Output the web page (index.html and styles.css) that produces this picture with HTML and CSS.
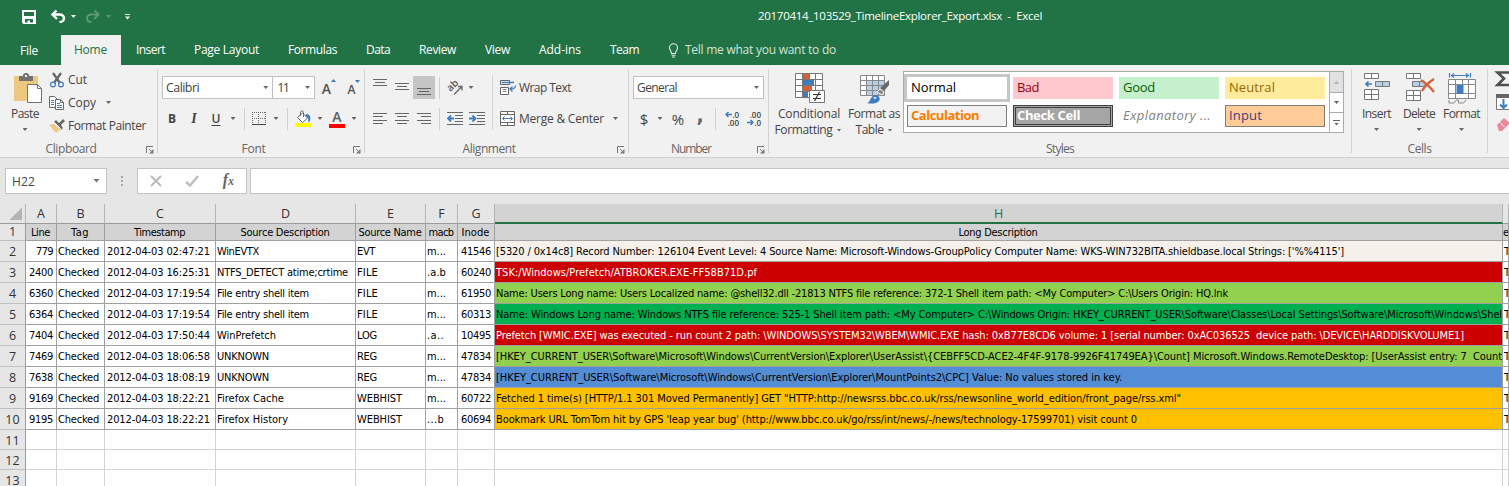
FILE: index.html
```html
<!DOCTYPE html>
<html lang="en">
<head>
<meta charset="utf-8">
<title>20170414_103529_TimelineExplorer_Export.xlsx - Excel</title>
<link rel="stylesheet" href="styles.css">
</head>
<body>
<header class="top">
  <div class="titlebar">
    <svg class="quick" width="140" height="32" viewBox="0 0 140 32" fill="none">
      <path d="M22 10h14v14H23.500L22 22.500zM24 12v4h10v-4zM25 19v3.500h2.500V20.500H30V22.500h3V19z" fill="#fff" fill-rule="evenodd"/>
      <path d="M56.500 10.500L52.500 14.500l4.500 4.500M53 14.500h6.500c6 0 6 7.500 0 7.500" stroke="#fff" stroke-width="2.400"/>
      <path d="M71 15h5l-2.500 3z" fill="#fff"/>
      <path d="M94.500 10.500L98.500 14.500l-4.500 4.500M98 14.500h-6.500c-6 0-6 7.500 0 7.500" stroke="#5c9876" stroke-width="2"/>
      <path d="M106 15h5l-2.500 3z" fill="#5c9876"/>
      <path d="M125 14.500h5" stroke="#fff"/><path d="M125 16.500h5l-2.500 3z" fill="#fff"/>
    </svg>
    <span class="doc" data-w="284">20170414_103529_TimelineExplorer_Export.xlsx &nbsp;- &nbsp;Excel</span>
  </div>
  <nav class="tabs">
    <a class="tab file"><span data-w="18">File</span></a>
    <a class="tab home"><span data-w="33">Home</span></a>
    <a class="tab"><span data-w="29">Insert</span></a>
    <a class="tab"><span data-w="65">Page Layout</span></a>
    <a class="tab"><span data-w="49">Formulas</span></a>
    <a class="tab"><span data-w="24">Data</span></a>
    <a class="tab"><span data-w="37">Review</span></a>
    <a class="tab"><span data-w="25">View</span></a>
    <a class="tab"><span data-w="42">Add-ins</span></a>
    <a class="tab"><span data-w="29">Team</span></a>
    <a class="tell"><svg width="11" height="15" viewBox="0 0 11 15" fill="none" stroke="#e4eee8" stroke-width="1.1"><path d="M3.500 10.500C3.500 8 1.500 7.500 1.500 4.700a4 4 0 0 1 8 0C9.500 7.500 7.500 8 7.500 10.500zM3.500 12.200h4M4 14h3"/></svg><span data-w="151">Tell me what you want to do</span></a>
  </nav>
</header>

<section class="ribbon">
  <div class="group clipboard">
    <div class="body">
      <div class="big paste">
        <svg width="30" height="32" viewBox="0 0 30 32"><path d="M1 3h24v25H1z" fill="#edc87e"/><path d="M6 3h4V1.500L12 0h2l2 1.500V3h4v5H6z" fill="#737373"/><path d="M12 2h2v2h-2z" fill="#f1f1f1"/><path d="M14.500 11.500h10l4 4v14h-14z" fill="#fff" stroke="#737373"/><path d="M24.500 11.500v4h4" fill="none" stroke="#737373"/></svg>
        <span data-w="28">Paste</span><i class="arr"></i>
      </div>
      <div class="stack">
        <div class="item"><svg width="16" height="16" viewBox="0 0 16 16" fill="none"><path d="M4 1l7 10M12 1L5 11" stroke="#686868" stroke-width="2.300"/><circle cx="4" cy="12.500" r="2.400" stroke="#3f7cc0" stroke-width="1.200"/><circle cx="12" cy="12.500" r="2.400" stroke="#3f7cc0" stroke-width="1.200"/></svg><span data-w="19">Cut</span></div>
        <div class="item"><svg width="16" height="16" viewBox="0 0 16 16"><path d="M.5 1.500h5l3 3v8h-8z" fill="#fff" stroke="#686868"/><path d="M2 5.500h3M2 7.500h3M2 9.500h3" stroke="#3f7cc0"/><path d="M6.500 4.500h5l3 3v7h-8z" fill="#fff" stroke="#686868"/><path d="M11.500 4.500v3h3" fill="none" stroke="#686868"/><path d="M8 8.500h3M8 10.500h5M8 12.500h5" stroke="#3f7cc0"/></svg><span data-w="28">Copy</span><i class="arr far"></i></div>
        <div class="item"><svg width="16" height="16" viewBox="0 0 16 16"><path d="M0 7l5-1 6 6-4 3z" fill="#edc87e"/><path d="M5 4l2-2 3 3 4-4 2 2-4 4 2 3-2 2z" fill="#686868"/><path d="M5.500 4.500l7 7" stroke="#f1f1f1"/></svg><span data-w="78">Format Painter</span></div>
      </div>
    </div>
    <div class="foot"><span class="lab"><span data-w="51">Clipboard</span></span><svg class="launch" width="8" height="8" viewBox="0 0 8 8"><path d="M.5 7V.5H7M3 3l3 3" fill="none" stroke="#777"/><path d="M7.500 3v4.500H3z" fill="#777"/></svg></div>
  </div>

  <div class="group font">
    <div class="body rows">
      <div class="row">
        <div class="combo face"><span data-w="33">Calibri</span><i class="arr"></i></div>
        <div class="combo size"><span data-w="11">11</span><i class="arr"></i></div>
        <div class="b grow"><span class="aa">A</span><svg width="5" height="3"><path d="M0 3h5L2.500 0z" fill="#3f7cc0"/></svg></div>
        <div class="b shrink"><span class="aa small">A</span><svg width="5" height="3"><path d="M0 0h5L2.500 3z" fill="#3f7cc0"/></svg></div>
      </div>
      <div class="row">
        <div class="b bold">B</div><div class="b ital">I</div><div class="b undl">U</div><div class="da"><i class="arr"></i></div>
        <i class="vs"></i>
        <div class="b"><svg width="14" height="14" viewBox="0 0 14 14" fill="none"><path d="M.5 0v12M13.500 0v12M6.500 0v12M0 .5h14M0 6.500h14" stroke="#6a6a6a" stroke-dasharray="1 1"/><path d="M0 12.500h14" stroke="#444"/></svg></div><div class="da"><i class="arr"></i></div>
        <i class="vs"></i>
        <div class="b wide"><svg width="17" height="17" viewBox="0 0 17 17" fill="none"><path d="M2.500 7.500l5-4.500 5 5-5 4.500z" fill="#fff" stroke="#686868"/><path d="M5.500 6V2.500c0-2 3-2 3 0V7" stroke="#686868"/><path d="M11 4c4 0 5 3 4 7l-2 1.500C14 9 13 8 10.500 6z" fill="#3f7cc0"/><path d="M0 13h16v4H0z" fill="#ff0"/></svg></div><div class="da slim"><i class="arr"></i></div>
        <div class="b wide colora"><b>A</b><i></i></div><div class="da slim"><i class="arr"></i></div>
      </div>
    </div>
    <div class="foot"><span class="lab"><span data-w="24">Font</span></span><svg class="launch" width="8" height="8" viewBox="0 0 8 8"><path d="M.5 7V.5H7M3 3l3 3" fill="none" stroke="#777"/><path d="M7.500 3v4.500H3z" fill="#777"/></svg></div>
  </div>

  <div class="group align">
    <div class="body">
      <div class="rows inner">
        <div class="row">
          <div class="b"><svg width="14" height="23" stroke="#666"><path d="M0 3.500h14M2 6.500h10M0 9.500h14"/></svg></div>
          <div class="b"><svg width="14" height="23" stroke="#666"><path d="M0 7.500h14M2 10.500h10M0 13.500h14"/></svg></div>
          <div class="b on"><svg width="14" height="23" stroke="#666"><path d="M0 12.500h14M2 15.500h10M0 18.500h14"/></svg></div>
          <i class="vs"></i>
          <div class="b orient"><span>ab</span><svg width="9" height="11" viewBox="0 0 9 11"><path d="M0 9.500L7.500 2M4 1.500h4v4" fill="none" stroke="#666" stroke-width="1.300"/></svg></div><div class="da slim"><i class="arr"></i></div>
        </div>
        <div class="row">
          <div class="b"><svg width="14" height="12" stroke="#666"><path d="M0 .5h14M0 3.500h10M0 7.500h14M0 10.500h10"/></svg></div>
          <div class="b"><svg width="14" height="12" stroke="#666"><path d="M0 .5h14M2 3.500h10M0 7.500h14M2 10.500h10"/></svg></div>
          <div class="b"><svg width="14" height="12" stroke="#666"><path d="M0 .5h14M4 3.500h10M0 7.500h14M4 10.500h10"/></svg></div>
          <i class="vs"></i>
          <div class="b"><svg width="16" height="14" stroke="#666"><path d="M0 .5h16M8 3.500h8M8 6.500h8M8 9.500h8M0 12.500h16"/><path d="M7 6.500H1.500M4 3.500l-3 3 3 3" fill="none" stroke="#3f7cc0" stroke-width="1.800"/></svg></div>
          <div class="b"><svg width="16" height="14" stroke="#666"><path d="M0 .5h16M8 3.500h8M8 6.500h8M8 9.500h8M0 12.500h16"/><path d="M0 6.500h5.500M3.500 3.500l3 3-3 3" fill="none" stroke="#3f7cc0" stroke-width="1.800"/></svg></div>
        </div>
      </div>
      <i class="tall"></i>
      <div class="rows inner wrapcol">
        <div class="row item2"><svg width="17" height="16" viewBox="0 0 17 16" fill="none"><path d="M.5.5h9v4h-9zM.5 7.500h8v7h-8z" fill="#fff" stroke="#666"/><path d="M2.500 9.500h4M2.500 11.500h4" stroke="#888"/><path d="M1.500 2.500H14M15.500 5.500c0 3-2 3.500-5 3.500M12.500 6.500L10 9l2.500 2.500" stroke="#3f7cc0" stroke-width="1.300"/></svg><span data-w="52">Wrap Text</span></div>
        <div class="row item2"><svg width="17" height="16" viewBox="0 0 17 16" fill="none"><path d="M.5.5h14v14H.5zM.5 3.500h14M.5 11.500h14M7.500.5v3M7.500 11.500v3" fill="#fff" stroke="#666"/><path d="M2 7.500h11M4.500 5.500l-2 2 2 2M10.500 5.500l2 2-2 2" stroke="#3f7cc0"/></svg><span data-w="85">Merge &amp; Center</span><i class="arr"></i></div>
      </div>
    </div>
    <div class="foot"><span class="lab"><span data-w="53">Alignment</span></span><svg class="launch" width="8" height="8" viewBox="0 0 8 8"><path d="M.5 7V.5H7M3 3l3 3" fill="none" stroke="#777"/><path d="M7.500 3v4.500H3z" fill="#777"/></svg></div>
  </div>

  <div class="group number">
    <div class="body rows">
      <div class="row"><div class="combo gen"><span data-w="40">General</span><i class="arr"></i></div></div>
      <div class="row">
        <div class="b sym">$</div><div class="da slim"><i class="arr"></i></div><div class="b sym pct">%</div><div class="b comma">,</div>
        <i class="vs"></i>
        <div class="b dec"><div><svg width="7" height="7" viewBox="0 0 7 7"><path d="M7 3.500H1.500M3.500 1L1 3.500 3.500 6" fill="none" stroke="#3f7cc0" stroke-width="1.500"/></svg><span>.0</span></div><div><span>.00</span></div></div>
        <div class="b dec"><div><span>.00</span></div><div><svg width="7" height="7" viewBox="0 0 7 7"><path d="M0 3.500h5.500M3.500 1L6 3.500 3.500 6" fill="none" stroke="#3f7cc0" stroke-width="1.500"/></svg><span>.0</span></div></div>
      </div>
    </div>
    <div class="foot"><span class="lab"><span data-w="40">Number</span></span><svg class="launch" width="8" height="8" viewBox="0 0 8 8"><path d="M.5 7V.5H7M3 3l3 3" fill="none" stroke="#777"/><path d="M7.500 3v4.500H3z" fill="#777"/></svg></div>
  </div>

  <div class="group styles">
    <div class="body">
      <div class="big cond">
        <svg width="31" height="32" viewBox="0 0 31 32" fill="none"><path d="M.5.500h27v24H.5z" fill="#fff"/><path d="M8 1h6v5H8zM8 13h9v5H8z" fill="#d95f3b"/><path d="M8 7h11v5H8zM8 19h5v5H8z" fill="#3f7cc0"/><path d="M.5.500h27v24H.5zM7.500.500v24M14.500.500v6M20.500.500v24M.5 6.500h27M.5 12.500h27M.5 18.500h27" stroke="#777"/><path d="M14.500 17.500h15v12h-15z" fill="#fff" stroke="#777"/><path d="M18 21.500h8M18 25.500h8M24.500 19l-5 9" stroke="#333" stroke-width="1.200"/></svg>
        <span data-w="62">Conditional</span><div class="ln"><span data-w="58">Formatting</span><i class="arr"></i></div>
      </div>
      <div class="big tbl">
        <svg width="31" height="32" viewBox="0 0 31 32" fill="none"><path d="M.5 2.500h24v20H.5z" fill="#fff"/><path d="M7 8h18v15H7z" fill="#b8cfe8"/><path d="M.5 2.500h24v20H.5zM6.500 2.500v20M12.500 2.500v20M18.500 2.500v20M.5 7.500h24M.5 12.500h24M.5 17.500h24" stroke="#888"/><path d="M29 7v5l-5 6-4-3z" fill="#686868"/><path d="M20 16l4 3-2 3-5-3z" fill="#888" stroke="#f1f1f1"/><path d="M7 30c4-1 3-7 8-8 4 0 6 4 4 6-3 3-8 3-12 2z" fill="#3f7cc0"/><path d="M13 25c2-2 4-1 3 1z" fill="#fff"/></svg>
        <span data-w="52">Format as</span><div class="ln"><span data-w="28">Table</span><i class="arr"></i></div>
      </div>
      <div class="gallery">
        <div class="swatches">
          <div class="sw normal"><span data-w="45">Normal</span></div>
          <div class="sw bad"><span data-w="22">Bad</span></div>
          <div class="sw good"><span data-w="32">Good</span></div>
          <div class="sw neutral"><span data-w="46">Neutral</span></div>
          <div class="sw calc"><span data-w="68">Calculation</span></div>
          <div class="sw check"><span data-w="63">Check Cell</span></div>
          <div class="sw expl"><span data-w="88">Explanatory ...</span></div>
          <div class="sw input"><span data-w="33">Input</span></div>
        </div>
        <div class="scroll"><div class="off"><i class="arr up"></i></div><div><i class="arr"></i></div><div class="more"><i class="arr"></i></div></div>
      </div>
    </div>
    <div class="foot"><span class="lab"><span data-w="28">Styles</span></span></div>
  </div>

  <div class="group cells">
    <div class="body">
      <div class="big">
        <svg width="28" height="32" viewBox="0 0 28 32" fill="none"><path d="M1.500.500h14v5h-14zM8.500.500v5M1.500 16.500h14v10h-14zM8.500 16.500v10M1.500 21.500h14" fill="#fff" stroke="#777"/><path d="M12.500 8.500h14v5h-14zM19.500 8.500v5" fill="#b8cfe8" stroke="#777"/><path d="M9 11H3M5.500 8.500L3 11l2.500 2.500" stroke="#3f7cc0" stroke-width="1.700"/></svg>
        <span data-w="29">Insert</span><i class="arr"></i>
      </div>
      <div class="big del">
        <svg width="30" height="32" viewBox="0 0 30 32" fill="none"><path d="M.5.500h14v5H.5zM7.500.500v5M.5 17.500h14v10H.5zM7.500 17.500v10M.5 22.500h14" fill="#fff" stroke="#777"/><path d="M6.500 8.500h11l2 2.500-2 2.500h-11zM13.500 8.500v5" fill="#b8cfe8" stroke="#777"/><path d="M15 7c5 3 9 7 13 12M28 6c-5 3-9 7-12 12" stroke="#d95f3b" stroke-width="2.300"/></svg>
        <span data-w="32">Delete</span><i class="arr"></i>
      </div>
      <div class="big fmt">
        <svg width="30" height="32" viewBox="0 0 30 32" fill="none"><path d="M2.500 0v4.500M23.500 0v4.500M4 2.500h18M7 .5l-2.500 2L7 4.500M19 .5l2.500 2-2.500 2" stroke="#3f7cc0" stroke-width="1.200"/><path d="M1.500 6.500h26v19h-26z" fill="#fff"/><path d="M1.500 6.500h27v19h-27zM8.500 6.500v19M15.500 6.500v5M21.500 6.500v19M1.500 11.500h27M1.500 20.500h27" stroke="#888"/><path d="M9.500 12h7v9h-7z" fill="#3f7cc0"/><path d="M2 27v3h5l2.500-3h2v3h5l2.500-3" stroke="#888"/></svg>
        <span data-w="37">Format</span><i class="arr"></i>
      </div>
    </div>
    <div class="foot"><span class="lab"><span data-w="24">Cells</span></span></div>
  </div>

  <div class="group edit">
    <svg width="21" height="80" viewBox="0 0 21 80" fill="none"><path d="M22 7.500H9.500l6.500 6-6.500 6.500H22" stroke="#505050" stroke-width="2.600"/><path d="M8.500 32.500h16v12h-16z" fill="#fff" stroke="#777"/><path d="M8 29h16v4H8z" fill="#666"/><path d="M15.500 34v9M12 39.500l3.500 3.500 3.500-3.500" stroke="#3f7cc0" stroke-width="2"/><path d="M9 60l7-7 6 5-8 8h-3z" fill="#e8889b"/><path d="M11.500 57l5 5" stroke="#f1f1f1"/></svg>
  </div>
</section>

<section class="formula">
  <div class="name"><span data-w="23">H22</span><i class="arr"></i></div>
  <div class="dots"><i></i><i></i><i></i></div>
  <div class="fx">
    <svg width="12" height="12" viewBox="0 0 12 12" stroke="#b9b9b9" stroke-width="1.800"><path d="M1 1l10 10M11 1L1 11"/></svg>
    <svg width="14" height="12" viewBox="0 0 14 12" fill="none" stroke="#bcbcbc" stroke-width="2.400"><path d="M1 7l4 3.500 8-9.500"/></svg>
    <span class="f">f<small>x</small></span>
  </div>
  <div class="entry"></div>
</section>

<main class="sheet" id="sheet"></main>
<script src="sheet.js"></script>
</body>
</html>
```
FILE: styles.css
```css
* { box-sizing: border-box; }
body { margin: 0; width: 1509px; height: 486px; overflow: hidden; background: #e6e6e6; font: 12px/16px "Open Sans", "Noto Sans", sans-serif; color: #444; }
span[data-w] { display: inline-block; white-space: nowrap; }
svg { display: block; flex: none; }
.arr { width: 5px; height: 3px; background: #666; clip-path: polygon(0 0, 100% 0, 50% 100%); display: block; flex: none; }

.top { background: #217346; color: #fff; height: 65px; }
.titlebar { height: 35px; display: flex; }
.quick { margin-right: 618px; }
.doc { line-height: 32px; font-size: 11.5px; }
.tabs { height: 30px; display: flex; }
.tab { line-height: 30px; padding-right: 29px; }
.tab.file { width: 61px; padding: 1px 0 0 20px; }
.tab.home { width: 60px; margin-right: 15px; padding: 0 0 0 13px; background: #f1f1f1; color: #217346; }
.tell { display: flex; align-items: center; gap: 6px; color: #d3e3da; }

.ribbon { height: 93px; display: flex; background: #f1f1f1; border-bottom: 1px solid #d0d0d0; }
.group { display: flex; flex-direction: column; height: 92px; background: linear-gradient(#d2d2d2, #d2d2d2) right 4px / 1px 84px no-repeat; }
.clipboard { width: 158px; }
.font { width: 207px; }
.align { width: 264px; }
.number { width: 140px; }
.styles { width: 583px; }
.cells { width: 136px; }
.edit { width: 21px; background: none; }
.body { height: 75px; display: flex; }
.rows { flex-direction: column; gap: 8px; padding: 11px 0 0 4px; display: flex; }
.font .rows { padding-left: 3px; }
.row { display: flex; align-items: center; height: 23px; }
.foot { height: 17px; display: flex; align-items: center; color: #666; padding-top: 1px; }
.foot .lab { flex: 1; text-align: center; padding-right: 1px; }
.launch { margin: 2px 4px 0 3px; }

.big { display: flex; flex-direction: column; align-items: center; padding-top: 8px; }
.big svg { margin-bottom: 1px; }
.big > .arr { margin-top: 6px; }
.ln { display: flex; align-items: center; gap: 4px; }
.paste { width: 49px; padding-left: 1px; }
.paste svg { margin-left: 5px; }
.stack { padding-top: 3px; }
.item { display: flex; align-items: center; height: 23px; gap: 3px; }
.item .far { margin-left: 7px; }

.combo { height: 23px; border: 1px solid #c0c0c0; background: #fff; display: flex; align-items: center; justify-content: space-between; padding: 0 4px 0 3px; }
.face { width: 112px; margin-left: 1px; font-size: 12.5px; }
.size { width: 43px; margin-left: -1px; padding-left: 4px; font-size: 12.5px; }
.gen { width: 131px; }
.b { width: 22px; height: 23px; display: flex; align-items: center; justify-content: center; flex: none; }
.b.wide { width: 24px; }
.b.on { background: #c5c5c5; }
.da { width: 12px; display: flex; justify-content: center; }
.da.slim { width: 10px; }
.vs { width: 1px; height: 22px; background: #cfcfcf; margin: 0 3px 0 5px; }
.align .vs, .number .vs { margin: 0 4px; }
.number .vs { margin-left: 6px; }
.tall { width: 1px; height: 55px; background: #d5d5d5; margin: 10px 3px 0 4px; }
.item2 { gap: 2px; }
.item2 .arr { margin-left: 7px; }
.grow, .shrink { align-items: flex-start; padding-top: 4px; margin-left: 3px; }
.grow svg { margin-top: -1px; }
.aa { font-size: 14px; font-weight: 600; line-height: 17px; color: #555; }
.aa.small { font-size: 12px; line-height: 19px; }
.bold { font-weight: 700; }
.ital { font: italic 700 14px "Liberation Serif", serif; }
.undl { font-weight: 600; text-decoration: underline; text-underline-offset: 2px; }
.colora { flex-direction: column; }
.colora b { font-size: 14px; line-height: 14px; height: 14px; font-weight: 600; color: #606060; }
.colora i { width: 16px; height: 4px; background: #f00; }
.orient { position: relative; }
.orient span { transform: rotate(-45deg); font: 600 10px/12px "Open Sans", sans-serif; color: #555; margin: -6px 0 0 -6px; }
.orient svg { position: absolute; right: 3px; bottom: 3px; }
.sym { font-size: 15px; }
.pct { width: 26px; }
.comma { width: 18px; font: 700 19px/19px "DejaVu Sans", sans-serif; padding-bottom: 6px; color: #666; }
.dec { flex-direction: column; font: 600 8px/8px "Open Sans", sans-serif; }
.dec div { width: 16px; height: 8px; display: flex; justify-content: flex-end; }

.cond { width: 80px; }
.cond svg { margin-left: 3px; }
.cond .ln { margin-left: -2px; }
.tbl { width: 50px; }
.tbl svg { margin-left: 3px; }
.gallery { width: 441px; height: 62px; margin: 6px 0 0 4px; border: 1px solid #ababab; background: #fff; display: flex; }
.swatches { width: 425px; padding: 5px 0 0 3px; display: grid; grid-template-columns: repeat(4, 100px); grid-auto-rows: 22px; gap: 6px; }
.sw { display: flex; align-items: center; padding: 0 0 2px 4px; font-size: 13px; }
.normal { color: #000; box-shadow: 0 0 0 3px #c6c6c6; }
.bad { background: #ffc7ce; color: #9c0006; }
.good { background: #c6efce; color: #006100; }
.neutral { background: #ffeb9c; color: #9c6500; }
.calc { background: #f2f2f2; border: 1px solid #7f7f7f; color: #fa7d00; font-weight: 700; padding-left: 3px; }
.check { background: #a5a5a5; border: 3px double #3f3f3f; color: #fff; font-weight: 700; padding-left: 1px; }
.expl { color: #7f7f7f; font-style: italic; }
.input { background: #ffcc99; border: 1px solid #7f7f7f; color: #3f3f76; padding-left: 3px; }
.scroll { width: 14px; border-left: 1px solid #ababab; display: grid; grid-template-rows: 20px 20px 20px; }
.scroll div { display: flex; align-items: center; justify-content: center; border-top: 1px solid #ababab; }
.scroll .off { background: #e1e1e1; border: 0; }
.up { transform: rotate(180deg); background: #b0b0b0; }
.scroll .more { flex-direction: column; }
.more::before { content: ""; width: 7px; height: 1px; background: #666; margin-bottom: 2px; }
.cells .body { padding-left: 10px; }
.cells .big { width: 29px; }
.cells .del { width: 32px; margin-left: 12px; }
.del svg { margin-left: 4px; }
.cells .fmt { width: 37px; margin-left: 8px; }

.formula { height: 46px; padding: 10px 0 10px 5px; display: flex; }
.formula > div { height: 26px; display: flex; align-items: center; }
.name { width: 102px; background: #fff; border: 1px solid #c4c4c4; justify-content: space-between; padding: 2px 6px 0; }
.name .arr { width: 7px; height: 4px; background: #777; margin-bottom: 3px; }
.formula .dots { width: 30px; flex-direction: column; justify-content: center; gap: 2px; }
.dots i { width: 2px; height: 2px; background: #a8a8a8; }
.fx { width: 110px; background: #fff; border: 1px solid #c4c4c4; padding: 0 12px 0 12px; justify-content: space-between; }
.f { font: italic 700 16px "Liberation Serif", serif; color: #666; padding-bottom: 2px; }
.f small { font-size: 12px; }
.entry { flex: 1; margin-left: 3px; background: #fff; border: 1px solid #c4c4c4; border-right: 0; }

.sheet { display: grid; grid-template-columns: 26px 31px 48px 111px 140px 70px 32px 37px 1008px 6px; grid-template-rows: 20px 17px repeat(9, 21px) repeat(3, 20px); }
.sheet > div { overflow: hidden; white-space: nowrap; }
.ch { border-right: 1px solid #b5b5b5; border-bottom: 1px solid #9c9c9c; text-align: center; font-size: 12.5px; line-height: 19px; color: #333; }
.ch.sel { background: #d3d3d3; border-bottom: 2px solid #217346; color: #217346; }
.corner { background: linear-gradient(135deg, transparent 50%, #b4b4b4 50%) 10px 4px / 12px 12px no-repeat; }
.rh { border-right: 1px solid #9c9c9c; text-align: center; color: #333; border-bottom: 1px solid #c0c0c0; font-size: 12.5px; line-height: 22px; }
.rh.first { line-height: 16px; }
.hd, .cell { font: 11px/19px "DejaVu Sans Condensed", "DejaVu Sans", sans-serif; color: #000; border-right: 1px solid #a0a0a0; border-bottom: 1px solid #a0a0a0; }
.hd { background: #d3d3d3; text-align: center; line-height: 17px; padding-right: 1px; }
.cell { background: #fff; padding-left: 1px; line-height: 21px; }
.cell.num { text-align: right; padding-right: 3px; }
.cell.time { padding-left: 2px; }
.cell.blank { border-color: #d4d4d4; }
.cell.tan { background: #f5f1ea; }
.cell.red { background: #c00; color: #fff; }
.cell.lime { background: #92d050; }
.cell.green { background: #00b050; }
.cell.blue { background: #538dd5; }
.cell.gold { background: #ffc000; }
```
FILE: sheet.js
```js
const columns = "ABCDEFGH".split("");
const headers = [["Line", 19], ["Tag", 18], ["Timestamp", 51], ["Source Description", 89], ["Source Name", 63], ["macb", 25], ["Inode", 28], ["Long Description", 79]];
const rows = [
  ["779", 17, "02:47:21", "WinEVTX", 42, "EVT", 18, "m...", 19, "41546", "tan", "[5320 / 0x14c8] Record Number: 126104 Event Level: 4 Source Name: Microsoft-Windows-GroupPolicy Computer Name: WKS-WIN732BITA.shieldbase.local Strings: ['%%4115']", 848],
  ["2400", 24, "16:25:31", "NTFS_DETECT atime;crtime", 131, "FILE", 21, ".a.b", 19, "60240", "red", "TSK:/Windows/Prefetch/ATBROKER.EXE-FF58B71D.pf", 261],
  ["6360", 24, "17:19:54", "File entry shell item", 92, "FILE", 21, "m...", 19, "61950", "lime", "Name: Users Long name: Users Localized name: @shell32.dll -21813 NTFS file reference: 372-1 Shell item path: <My Computer> C:\\Users Origin: HQ.lnk", 732],
  ["6364", 24, "17:19:54", "File entry shell item", 92, "FILE", 21, "m...", 19, "60313", "green", "Name: Windows Long name: Windows NTFS file reference: 525-1 Shell item path: <My Computer> C:\\Windows Origin: HKEY_CURRENT_USER\\Software\\Classes\\Local Settings\\Software\\Microsoft\\Windows\\Shel", 1006],
  ["7404", 24, "17:50:44", "WinPrefetch", 59, "LOG", 20, ".a..", 17, "10495", "red", "Prefetch [WMIC.EXE] was executed - run count 2 path: \\WINDOWS\\SYSTEM32\\WBEM\\WMIC.EXE hash: 0xB77E8CD6 volume: 1 [serial number: 0xAC036525\u00a0 device path: \\DEVICE\\HARDDISKVOLUME1]", 968],
  ["7469", 24, "18:06:58", "UNKNOWN", 52, "REG", 20, "m...", 19, "47834", "lime", "[HKEY_CURRENT_USER\\Software\\Microsoft\\Windows\\CurrentVersion\\Explorer\\UserAssist\\{CEBFF5CD-ACE2-4F4F-9178-9926F41749EA}\\Count] Microsoft.Windows.RemoteDesktop: [UserAssist entry: 7\u00a0 Count", 1006],
  ["7638", 24, "18:08:19", "UNKNOWN", 52, "REG", 20, "m...", 19, "47834", "blue", "[HKEY_CURRENT_USER\\Software\\Microsoft\\Windows\\CurrentVersion\\Explorer\\MountPoints2\\CPC] Value: No values stored in key.", 626],
  ["9169", 24, "18:22:21", "Firefox Cache", 67, "WEBHIST", 45, "m...", 19, "60722", "gold", "Fetched 1 time(s) [HTTP/1.1 301 Moved Permanently] GET \"HTTP:http://newsrss.bbc.co.uk/rss/newsonline_world_edition/front_page/rss.xml\"", 685],
  ["9195", 24, "18:22:21", "Firefox History", 71, "WEBHIST", 45, "...b", 17, "60694", "gold", "Bookmark URL TomTom hit by GPS 'leap year bug' (http://www.bbc.co.uk/go/rss/int/news/-/news/technology-17599701) visit count 0", 641]
];

const sheet = document.getElementById("sheet");

function add(cls, text, width) {
  const cell = document.createElement("div");
  cell.className = cls;
  if (width) {
    const span = document.createElement("span");
    span.dataset.w = width;
    span.textContent = text;
    cell.append(span);
  } else {
    cell.textContent = text;
  }
  sheet.append(cell);
}

add("ch corner", "");
columns.forEach(c => add(c === "H" ? "ch sel" : "ch", c));
add("ch", "");
add("rh first", "1");
headers.forEach(([text, width]) => add("hd", text, width));
add("hd", "e");
rows.forEach((r, i) => {
  add("rh", i + 2);
  add("cell num", r[0], r[1]);
  add("cell", "Checked", 41);
  add("cell time", "2012-04-03 " + r[2], 103);
  add("cell", r[3], r[4]);
  add("cell", r[5], r[6]);
  add("cell", r[7], r[8]);
  add("cell num", r[9], 30);
  add("cell " + r[10], r[11], r[12]);
  add("cell", "T", 6);
});
for (let n = 11; n <= 13; n++) {
  add("rh", n);
  for (let i = 0; i < 9; i++) add("cell blank", "");
}

// Track each label so that it fills its assigned width.
document.querySelectorAll("span[data-w]").forEach(span => {
  const gap = span.dataset.w - span.getBoundingClientRect().width;
  span.style.letterSpacing = gap / span.textContent.length + "px";
});
```
